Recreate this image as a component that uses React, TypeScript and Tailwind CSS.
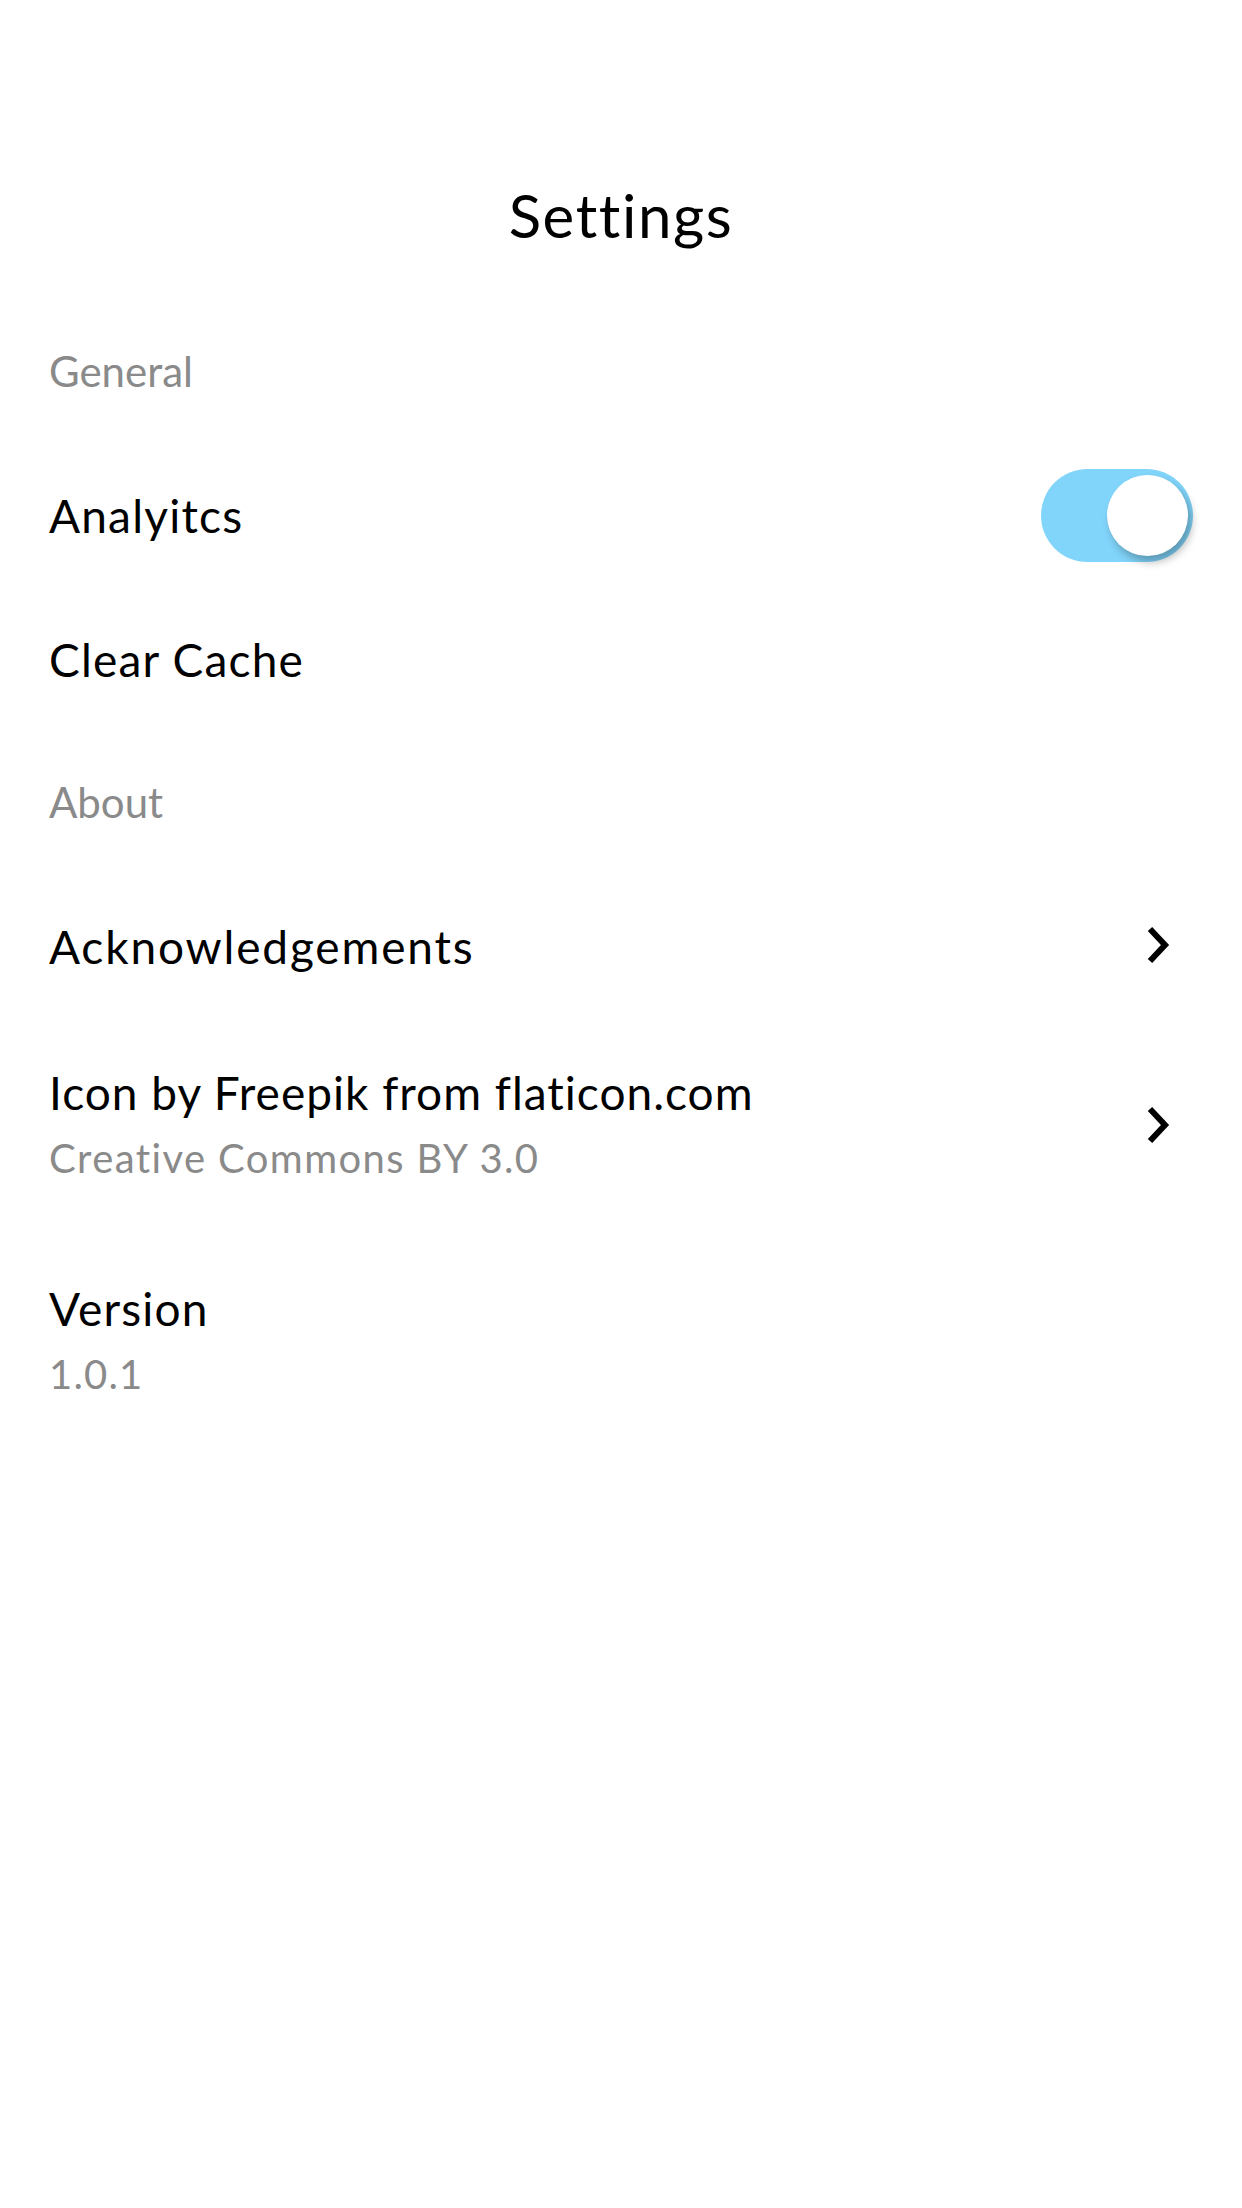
import React from "react";

function Chevron() {
  return (
    <svg width="32" height="44" viewBox="0 0 32 44" className="mr-[18px]">
      <path d="M7 5 L22 21 L7 37" fill="none" stroke="#000" strokeWidth="6" strokeLinecap="butt" strokeLinejoin="miter" />
    </svg>
  );
}

function Toggle() {
  return (
    <div className="relative w-[152px] h-[93px] rounded-full bg-[#81d4fa]">
      <div className="absolute right-[5px] top-[6px] w-[81px] h-[81px] rounded-full bg-white shadow-[4px_6px_8px_rgba(0,0,0,0.28)]" />
    </div>
  );
}

export default function App() {
  const font = { fontFamily: "Lato, 'Noto Sans', sans-serif" };
  return (
    <div className="w-[1242px] h-[2208px] bg-white text-black" style={font}>
      <div className="h-[300px] flex justify-center pt-[185px]">
        <h1 className="text-[60px] leading-[60px] font-normal tracking-[1.6px]">Settings</h1>
      </div>
      <div className="px-[49px]">
        <div className="h-[143px] flex items-center text-[42px] text-[#8a8a8a]">General</div>
        <div className="h-[144px] flex items-center justify-between text-[46px] tracking-[1.2px]">
          <span>Analyitcs</span>
          <Toggle />
        </div>
        <div className="h-[144px] flex items-center text-[46px] tracking-[1.2px]">Clear Cache</div>
        <div className="h-[143px] flex items-center text-[42px] text-[#8a8a8a]">About</div>
        <div className="h-[144px] flex items-center justify-between text-[46px] tracking-[1.85px]">
          <span>Acknowledgements</span>
          <Chevron />
        </div>
        <div className="h-[216px] flex items-center justify-between">
          <div className="flex flex-col">
            <span className="text-[46px] leading-[64px] tracking-[1px]">Icon by Freepik from flaticon.com</span>
            <span className="text-[40px] leading-[66px] tracking-[1.4px] text-[#8a8a8a]">Creative Commons BY 3.0</span>
          </div>
          <Chevron />
        </div>
        <div className="h-[216px] flex items-center">
          <div className="flex flex-col">
            <span className="text-[46px] leading-[64px] tracking-[1.2px]">Version</span>
            <span className="text-[40px] leading-[66px] tracking-[1.2px] text-[#8a8a8a]">1.0.1</span>
          </div>
        </div>
      </div>
    </div>
  );
}
